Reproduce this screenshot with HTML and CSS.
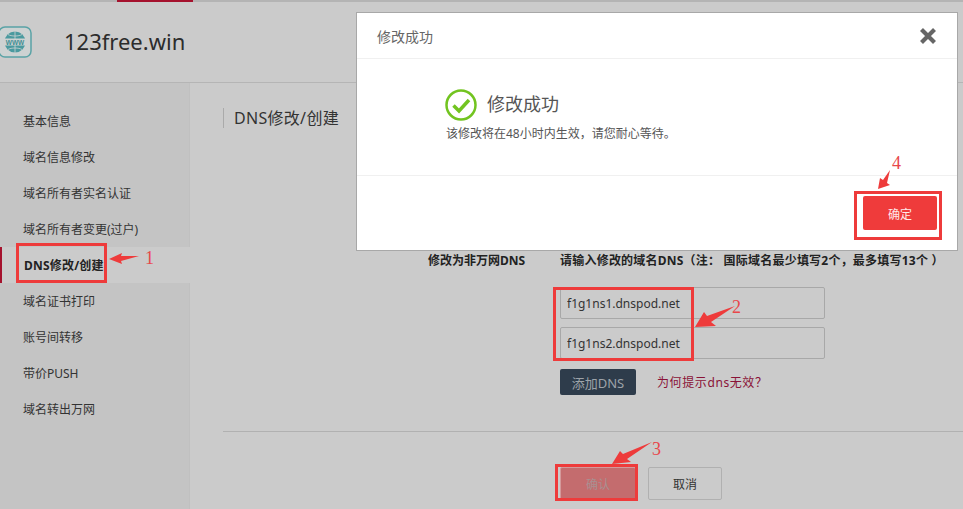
FILE: index.html
```html
<!DOCTYPE html>
<html lang="zh-CN">
<head>
<meta charset="utf-8">
<title>DNS修改/创建</title>
<link rel="stylesheet" href="styles.css">
</head>
<body>
<div class="page">
  <div class="topbar"><span class="topbar-mark"></span></div>
  <header class="domain-head">
    <svg class="logo" viewBox="0 0 32 32" width="32" height="32">
      <rect x="-1" y="1" width="32" height="30" rx="6" fill="#cdd2d2" stroke="#5aa3a6" stroke-width="1.500"/>
      <circle cx="15" cy="16" r="10.500" fill="#4a9a9f"/>
      <path d="M15 5v22M8 8.500c3 2 11 2 14 0M8 23.500c3-2 11-2 14 0" stroke="#cdd2d2" stroke-width=".8" fill="none"/>
      <rect x="3" y="12.500" width="24" height="7" fill="#cdd2d2"/>
      <text class="logo-text" x="15" y="18.500">WWW</text>
    </svg>
    <h1 class="domain-name">123free.win</h1>
  </header>
  <div class="content">
    <nav class="sidebar">
      <a class="nav-item">基本信息</a>
      <a class="nav-item">域名信息修改</a>
      <a class="nav-item">域名所有者实名认证</a>
      <a class="nav-item">域名所有者变更(过户)</a>
      <a class="nav-item active">DNS修改/创建</a>
      <a class="nav-item">域名证书打印</a>
      <a class="nav-item">账号间转移</a>
      <a class="nav-item">带价PUSH</a>
      <a class="nav-item">域名转出万网</a>
    </nav>
    <main class="main">
      <h2 class="section-title">DNS修改/创建</h2>
      <div class="dns-form">
        <div class="dns-label">修改为非万网DNS</div>
        <div class="dns-fields">
          <div class="dns-hint">请输入修改的域名DNS（注： 国际域名最少填写2个，最多填写13个 ）</div>
          <input class="dns-input" type="text" value="f1g1ns1.dnspod.net">
          <input class="dns-input" type="text" value="f1g1ns2.dnspod.net">
          <div class="dns-actions">
            <button class="btn-add" type="button">添加DNS</button>
            <a class="help-link">为何提示dns无效？</a>
          </div>
        </div>
      </div>
      <div class="form-footer">
        <button class="btn-confirm" type="button">确认</button>
        <button class="btn-cancel" type="button">取消</button>
      </div>
    </main>
  </div>

  <section class="modal">
    <div class="modal-head">
      <span class="modal-title">修改成功</span>
      <svg class="modal-close" viewBox="0 0 18 18" width="18" height="18"><path d="M2.500 2.500l13 13M15.500 2.500l-13 13" stroke="#666" stroke-width="4.200" fill="none"/></svg>
    </div>
    <div class="modal-body">
      <div class="result-line">
        <svg class="result-icon" viewBox="0 0 32 32" width="32" height="32">
          <circle cx="16" cy="16" r="14.500" fill="none" stroke="#72c420" stroke-width="2.500"/>
          <path d="M8.500 16.500l5.500 5.500L24 11" fill="none" stroke="#72c420" stroke-width="3.500"/>
        </svg>
        <span class="result-title">修改成功</span>
      </div>
      <p class="result-text">该修改将在48小时内生效，请您耐心等待。</p>
    </div>
    <div class="modal-foot">
      <button class="btn-ok" type="button">确定</button>
    </div>
  </section>

  <svg class="notes" viewBox="0 0 963 509" width="963" height="509">
    <g class="note-boxes">
      <rect x="17.500" y="244.500" width="88" height="37"/>
      <rect x="554.500" y="288.500" width="138" height="71"/>
      <rect x="556.500" y="465.500" width="80" height="34"/>
      <rect x="855.500" y="192.500" width="85" height="46"/>
    </g>
    <g class="note-arrows">
      <polygon points="109,259 122,253 121,256 139,256 121,261 122,264"/>
      <polygon points="695,327 704,312 707,316 735,306 711,322 716,326"/>
      <polygon points="612,464 620,451 623,454 652,442 627,459 631,462"/>
      <polygon points="878,189 880,178 883,180 890,170 887,183 890,185"/>
    </g>
    <g class="note-nums">
      <text x="145" y="264">1</text>
      <text x="732" y="313">2</text>
      <text x="652" y="455">3</text>
      <text x="892" y="169">4</text>
    </g>
  </svg>
</div>
</body>
</html>
```

FILE: styles.css
```css
* { box-sizing: border-box; }
html, body { margin: 0; padding: 0; }
body {
  width: 963px;
  height: 509px;
  overflow: hidden;
  background: #cbcbcb;
  font-family: "Noto Sans", "Noto Sans CJK SC", sans-serif;
  color: #2b2b2b;
}
.page { position: relative; width: 963px; height: 509px; overflow: hidden; }

.topbar { height: 2px; background: #b4b4b4; padding-left: 117px; }
.topbar-mark { display: block; width: 76px; height: 2px; background: #a5122d; }

.domain-head {
  display: flex;
  align-items: center;
  height: 81px;
  border-bottom: 1px solid #b5b5b5;
}
.logo { flex: none; width: 32px; height: 32px; }
.logo-text { font: 700 6.500px "Liberation Sans", sans-serif; fill: #3f8f94; text-anchor: middle; }
.domain-name { margin: 0 0 2px 32px; font-size: 22px; font-weight: 400; line-height: 32px; color: #2c2c2c; }

.content { display: flex; height: 426px; }
.sidebar {
  flex: none;
  width: 190px;
  padding-top: 20px;
  background: #c4c4c4;
  border-right: 1px solid #c0c0c0;
}
.nav-item {
  display: block;
  height: 36px;
  padding-top: 1px;
  padding-left: 23px;
  font-size: 12px;
  line-height: 36px;
  color: #333;
  white-space: nowrap;
}
.nav-item.active {
  width: 190px;
  padding-left: 22px;
  background: #cbcbcb;
  border-left: 2px solid #a5122d;
  font-weight: 700;
  letter-spacing: .2px;
  color: #222;
}

.main { flex: 1; padding-left: 33px; min-width: 0; }
.section-title {
  margin: 25px 0 0;
  height: 20px;
  padding-left: 10px;
  border-left: 1px solid #aaa;
  font-size: 16px;
  font-weight: 400;
  letter-spacing: .3px;
  line-height: 20px;
  color: #333;
}
.dns-form { display: flex; height: 179px; margin-top: 124px; padding-left: 205px; }
.dns-label { flex: none; width: 132px; font-size: 12px; font-weight: 700; line-height: 18px; color: #222; }
.dns-hint { height: 35px; font-size: 12px; font-weight: 700; letter-spacing: .22px; line-height: 18px; color: #222; white-space: nowrap; }
.dns-fields { display: flex; flex-direction: column; align-items: flex-start; }
.dns-input {
  flex: none;
  width: 265px;
  height: 32px;
  margin-bottom: 8px;
  padding: 0 6px;
  background: #cbcbcb;
  border: 1px solid #a8a8a8;
  border-radius: 2px;
  font: 12px "Noto Sans", sans-serif;
  color: #333;
}
.dns-actions { display: flex; align-items: center; margin-top: 2px; }
.btn-add {
  width: 76px;
  height: 26px;
  padding: 0;
  background: #2e3c4b;
  border: 0;
  border-radius: 2px;
  font: 13px "Noto Sans", "Noto Sans CJK SC", sans-serif;
  color: #9da3a9;
}
.help-link { margin-left: 21px; font-size: 12px; letter-spacing: .6px; color: #8a1237; }

.form-footer {
  display: flex;
  gap: 12px;
  height: 78px;
  padding: 35px 0 0 337px;
  border-top: 1px solid #b1b1b1;
}
.btn-confirm, .btn-cancel {
  height: 33px;
  padding: 0;
  border-radius: 2px;
  font: 12px "Noto Sans CJK SC", sans-serif;
}
.btn-confirm { width: 76px; background: #c46c6e; border: 1px solid #d49a9b; color: #a89091; }
.btn-cancel { width: 74px; background: #cbcbcb; border: 1px solid #b0b0b0; color: #333; }

.modal {
  position: absolute;
  left: 357px;
  top: 13px;
  width: 600px;
  height: 237px;
  display: flex;
  flex-direction: column;
  background: #fff;
  box-shadow: 0 0 0 1px #a8a8a8;
}
.modal-head {
  display: flex;
  align-items: center;
  justify-content: space-between;
  flex: none;
  height: 46px;
  padding: 1px 20px 0;
  border-bottom: 1px solid #f0f0f0;
}
.modal-title { font-size: 14px; color: #666; }
.modal-close { display: block; margin-right: 0; }
.modal-body { flex: none; height: 116px; padding: 30px 0 0 88px; }
.result-line { display: flex; align-items: center; gap: 10px; height: 32px; }
.result-icon { display: block; flex: none; }
.result-title { font-size: 18px; line-height: 30px; margin-bottom: 2px; color: #555; }
.result-text { margin: 5px 0 0 1px; font-size: 12px; line-height: 16px; color: #555; }
.modal-foot {
  flex: 1;
  display: flex;
  justify-content: flex-end;
  padding: 20px 20px 0 0;
  border-top: 1px solid #f0f0f0;
}
.btn-ok {
  width: 74px;
  height: 34px;
  padding: 0;
  background: #ef3b3b;
  border: 0;
  border-radius: 2px;
  font: 12px "Noto Sans CJK SC", sans-serif;
  color: #ffe9e9;
}

.notes { position: absolute; left: 0; top: 0; pointer-events: none; }
.note-boxes rect { fill: none; stroke: #ee3b3b; stroke-width: 3; }
.note-arrows polygon { fill: #ee3b3b; }
.note-nums text { font: 18px "Liberation Serif", serif; fill: #e8474a; }
```
